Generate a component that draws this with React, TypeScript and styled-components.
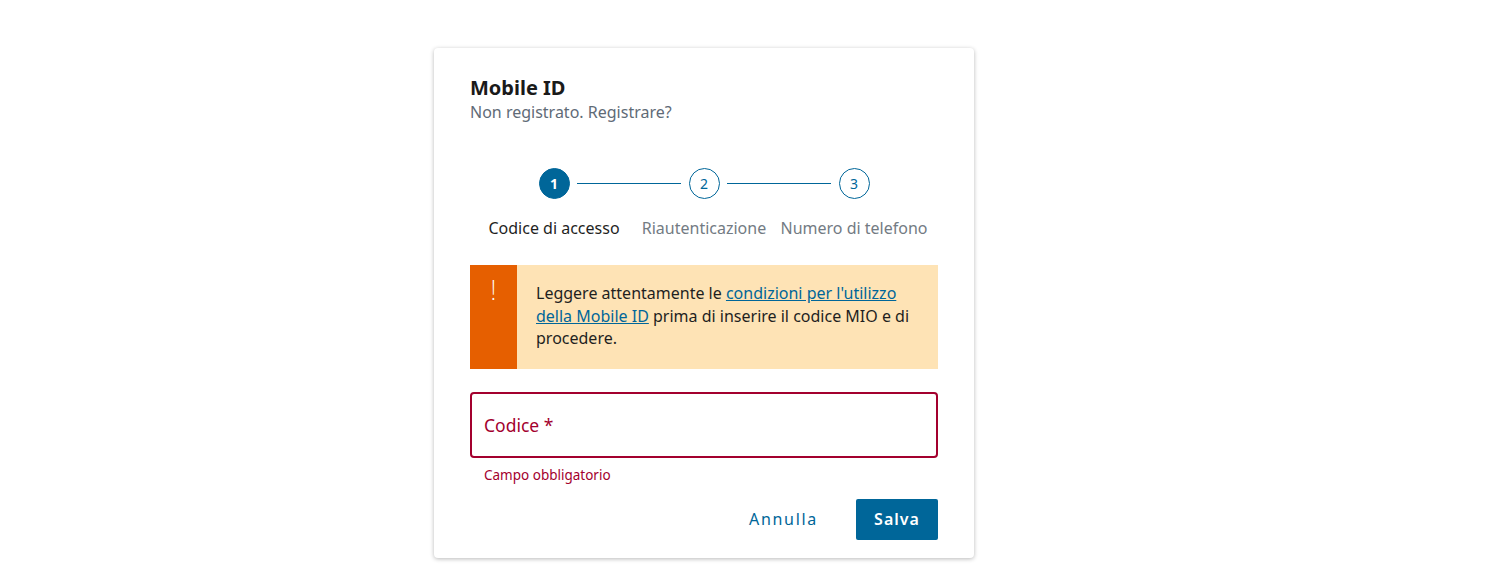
import React from "react";
import styled, { createGlobalStyle } from "styled-components";

const Global = createGlobalStyle`
  html, body { margin: 0; padding: 0; background: #ffffff; }
  body { font-family: "Noto Sans", "Open Sans", sans-serif; color: #1f1f1f; }
  * { box-sizing: border-box; }
`;

const Page = styled.div`
  display: flex;
  justify-content: flex-start;
  padding-top: 48px;
  padding-left: 434px;
  width: 1504px;
  height: 588px;
`;

const Card = styled.div`
  width: 540px;
  background: #fff;
  border-radius: 4px;
  box-shadow: 0 1px 4px rgba(0, 0, 0, 0.28);
  padding: 28px 36px 17px 36px;
  display: flex;
  flex-direction: column;
  height: 510px;
`;

const Title = styled.h1`
  margin: 0;
  font-size: 20px;
  font-weight: 700;
  line-height: 24px;
  color: #1a1a1a;
`;

const Subtitle = styled.p`
  margin: 2px 0 0;
  font-size: 16px;
  line-height: 20px;
  color: #5f6b77;
`;

const Stepper = styled.div`
  display: flex;
  justify-content: center;
  margin-top: 46px;
`;

const Step = styled.div`
  width: 150px;
  display: flex;
  flex-direction: column;
  align-items: center;
  position: relative;
`;

const Circle = styled.div<{ $active?: boolean }>`
  width: 31px;
  height: 31px;
  border-radius: 50%;
  display: flex;
  align-items: center;
  justify-content: center;
  font-size: 14px;
  font-weight: ${(p) => (p.$active ? 700 : 400)};
  color: ${(p) => (p.$active ? "#ffffff" : "#006699")};
  background: ${(p) => (p.$active ? "#006699" : "#ffffff")};
  border: 1px solid #006699;
  position: relative;
  z-index: 1;
`;

const Connector = styled.div`
  position: absolute;
  top: 15px;
  left: calc(50% + 23px);
  width: 104px;
  height: 1px;
  background: #006699;
`;

const StepLabel = styled.div<{ $active?: boolean }>`
  margin-top: 19px;
  font-size: 16px;
  line-height: 20px;
  white-space: nowrap;
  color: ${(p) => (p.$active ? "#1f1f1f" : "#737b83")};
`;

const Alert = styled.div`
  display: flex;
  margin-top: 27px;
  background: #fee3b5;
  min-height: 104px;
`;

const AlertBar = styled.div`
  width: 47px;
  flex-shrink: 0;
  background: #e65f00;
  color: #fff;
  display: flex;
  justify-content: center;
  padding-top: 9px;
  font-size: 27px;
  font-weight: 200;
  line-height: 32px;
`;

const AlertText = styled.p`
  margin: 0;
  padding: 17px 20px 16px 19px;
  font-size: 16px;
  line-height: 22.5px;
  color: #1f1f1f;
`;

const Link = styled.a`
  color: #006699;
  text-decoration: underline;
`;

const Field = styled.div`
  margin-top: 23px;
  height: 66px;
  border: 2px solid #a3002e;
  border-radius: 4px;
  display: flex;
  align-items: center;
  padding-left: 12px;
`;

const FieldLabel = styled.span`
  font-size: 17.5px;
  color: #a3002e;
`;

const Helper = styled.div`
  margin-top: 8px;
  padding-left: 14px;
  font-size: 13.5px;
  line-height: 18px;
  color: #a3002e;
`;

const Actions = styled.div`
  margin-top: 15px;
  display: flex;
  justify-content: flex-end;
  align-items: center;
  gap: 20px;
`;

const Button = styled.button<{ $primary?: boolean }>`
  font-family: inherit;
  font-size: 16px;
  font-weight: ${(p) => (p.$primary ? 600 : 400)};
  letter-spacing: ${(p) => (p.$primary ? "1px" : "1.7px")};
  height: 41px;
  padding: 0 18px 2px;
  min-width: 82px;
  border-radius: 2px;
  border: none;
  cursor: pointer;
  background: ${(p) => (p.$primary ? "#006699" : "transparent")};
  color: ${(p) => (p.$primary ? "#ffffff" : "#006699")};
`;

const steps = ["Codice di accesso", "Riautenticazione", "Numero di telefono"];

export default function App() {
  return (
    <>
      <Global />
      <Page>
        <Card>
          <Title>Mobile ID</Title>
          <Subtitle>Non registrato. Registrare?</Subtitle>
          <Stepper>
            {steps.map((s, i) => (
              <Step key={s}>
                <Circle $active={i === 0}>{i + 1}</Circle>
                {i < steps.length - 1 && <Connector />}
                <StepLabel $active={i === 0}>{s}</StepLabel>
              </Step>
            ))}
          </Stepper>
          <Alert>
            <AlertBar>!</AlertBar>
            <AlertText>
              Leggere attentamente le{" "}
              <Link href="#">condizioni per l'utilizzo della Mobile ID</Link>{" "}
              prima di inserire il codice MIO e di procedere.
            </AlertText>
          </Alert>
          <Field>
            <FieldLabel>Codice *</FieldLabel>
          </Field>
          <Helper>Campo obbligatorio</Helper>
          <Actions>
            <Button>Annulla</Button>
            <Button $primary>Salva</Button>
          </Actions>
        </Card>
      </Page>
    </>
  );
}
